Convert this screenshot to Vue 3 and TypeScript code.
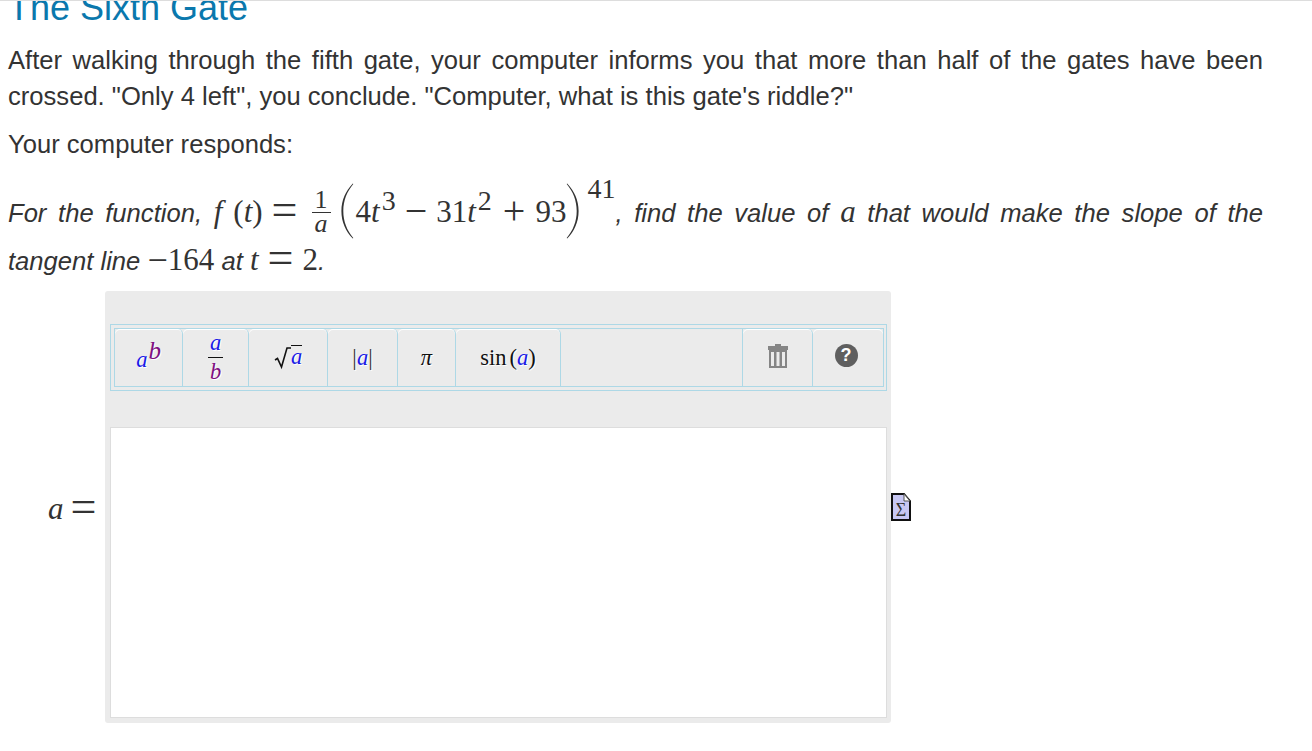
<template>
  <div class="page">
    <h2 class="title">The Sixth Gate</h2>
    <p>
      After walking through the fifth gate, your computer informs you that more than half of the gates have been
      crossed. "Only 4 left", you conclude. "Computer, what is this gate's riddle?"
    </p>
    <p>Your computer responds:</p>
    <p class="riddle">
      <em>For the function,</em> <span class="math"><i class="fn">f</i><span class="gap-s">(</span><i>t</i>)<span class="rel">=</span><span class="frac"><span class="num">1</span><i class="den">a</i></span><svg class="paren open-paren" viewBox="0 0 14 56" aria-hidden="true"><path d="M12.8 0.4C5.600 8 1.400 17 1.400 28s4.200 20 11.400 27.600l.5-.6C7 47.400 3.300 38.600 3.300 28S7 8.600 13.300 1z" /></svg><span>4<i>t</i><sup>3</sup></span><span class="bin">−</span><span>31<i>t</i><sup>2</sup></span><span class="bin plus">+</span><span>93</span><svg class="paren" viewBox="0 0 14 56" aria-hidden="true"><path d="M1.200 0.4C8.400 8 12.600 17 12.600 28S8.400 48 1.200 55.600l-.5-.6C7 47.400 10.700 38.600 10.700 28S7 8.600.7 1z" /></svg><sup class="outer">41</sup></span><em>, find the value of</em> <span class="math"><i>a</i></span> <em>that would make the slope of the tangent line</em> <span class="math"><span class="neg">−</span>164</span> <em>at</em> <span class="math"><i>t</i><span class="rel">=</span>2</span><em>.</em>
    </p>

    <div class="answer">
      <div class="label"><i>a</i><span class="rel">=</span></div>
      <div class="widget">
        <div class="toolbar">
          <div class="toolbar-inner">
            <button class="tool w1"><span class="mj low"><i class="v">a</i><sup class="p">b</sup></span></button>
            <button class="tool w2">
              <span class="mj stack"><i class="v">a</i><i class="p">b</i></span>
            </button>
            <button class="tool w3">
              <span class="mj">
                <svg class="radical" width="17" height="23" viewBox="0 0 17 23" aria-hidden="true">
                  <path d="M1 13l2.500-1.500L7.500 20 13 1h4" fill="none" stroke="#111" stroke-width="1.600" />
                </svg><i class="v over">a</i>
              </span>
            </button>
            <button class="tool w4"><span class="mj"><span class="bar">|</span><i class="v">a</i><span class="bar">|</span></span></button>
            <button class="tool w5"><span class="mj"><i>π</i></span></button>
            <button class="tool w6"><span class="mj">sin<span class="open">(</span><i class="v">a</i>)</span></button>
            <div class="spacer"></div>
            <button class="tool w7" aria-label="Clear">
              <svg class="icon-up" width="20" height="24" viewBox="0 0 20 24" aria-hidden="true">
                <path fill="#858585" fill-rule="evenodd" d="M7 0h6v2h7v4H0V2h7zM1 6h18v18H1zm2 2v14h3V8zm5.500 0v14h3V8zm5.500 0v14h3V8z" />
              </svg>
            </button>
            <button class="tool w8 last" aria-label="Help"><span class="help icon-up">?</span></button>
          </div>
        </div>
        <div class="editor"></div>
      </div>
      <svg class="doc" width="20" height="28" viewBox="0 0 20 28" aria-hidden="true">
        <path d="M1 1h12l6 7v19H1z" fill="#c8c8f4" stroke="#111" stroke-width="2" />
        <path d="M13 1v7h6z" fill="#fff" stroke="#555" />
        <text x="10" y="23" text-anchor="middle" class="sigma">Σ</text>
      </svg>
    </div>
  </div>
</template>

<script setup lang="ts">
// static page, nothing to wire up
</script>

<style>
html,
body {
  margin: 0;
  background: #fff;
  overflow: hidden;
}
</style>

<style scoped>
.page {
  height: 751px;
  box-sizing: border-box;
  border-top: 1px solid #ddd;
  padding: 0 49px 0 8px;
  overflow: hidden;
  font-family: 'Liberation Sans', Arial, sans-serif;
  font-size: 25.6px;
  line-height: 36px;
  color: #333;
}

.title {
  margin: -13px 0 14px;
  font-size: 36px;
  line-height: 40px;
  font-weight: 400;
  color: #0a78ad;
}

p {
  margin: 0 0 12px;
  text-align: justify;
}

em {
  font-style: italic;
}

.math {
  display: inline-block;
  font-family: 'Liberation Serif', 'Times New Roman', serif;
  font-size: 31px;
  white-space: nowrap;
}

.math sup {
  font-size: 28px;
  line-height: 0;
  margin-left: 2px;
  vertical-align: 12px;
}

.math .outer {
  vertical-align: 24px;
  margin-left: 7px;
}

.fn {
  padding-right: 6px;
}

.gap-s {
  margin-left: 5px;
}

.rel {
  margin: 0 9px;
  font-size: 46px;
  line-height: 0;
  vertical-align: -3px;
}

.bin {
  margin: 0 9px;
  font-size: 40px;
  line-height: 0;
  vertical-align: -2px;
}

.plus {
  margin: 0 10px 0 11px;
}

.neg {
  font-size: 36px;
  line-height: 0;
  vertical-align: -2px;
}

.frac {
  display: inline-flex;
  flex-direction: column;
  align-items: center;
  margin-left: 5px;
  vertical-align: 14px;
  font-size: 26px;
  line-height: 18px;
}

.num {
  border-bottom: 1px solid #333;
  padding: 0 3px 3px;
}

.den {
  line-height: 21px;
}

.paren {
  width: 14px;
  height: 56px;
  margin: 9px 0 3px;
  vertical-align: -20px;
  fill: #333;
}

.open-paren {
  margin-left: 9px;
  margin-right: 2px;
}

.answer {
  display: flex;
  align-items: center;
}

.label {
  width: 97px;
  padding: 4px 0 0 40px;
  box-sizing: border-box;
  font-family: 'Liberation Serif', 'Times New Roman', serif;
  font-size: 31px;
  white-space: nowrap;
}

.label .rel {
  margin: 0 0 0 7px;
}

.widget {
  width: 786px;
  height: 432px;
  box-sizing: border-box;
  padding: 33px 4px 5px 5px;
  background: #ebebeb;
  border-radius: 3px;
}

.toolbar {
  height: 67px;
  box-sizing: border-box;
  padding: 3px 2px 3px 3px;
  border: 1px solid #add8e6;
  margin-bottom: 36px;
}

.toolbar-inner {
  display: flex;
  height: 100%;
  box-sizing: border-box;
  border: 1px solid #add8e6;
}

.tool {
  display: flex;
  align-items: center;
  justify-content: center;
  padding: 0;
  border: 0;
  border-right: 1px solid #add8e6;
  border-radius: 5px 5px 0 0;
  background: #ebebeb;
  box-shadow: inset 0 1px 0 #fff;
  flex: none;
}

.w1 { width: 68px; }
.w2 { width: 66px; }
.w3 { width: 79px; }
.w4 { width: 70px; }
.w5 { width: 58px; }
.w6 { width: 105px; }
.w7 { width: 70px; }
.w8 { width: 70px; }

.last {
  border-right: 0;
}

.spacer {
  flex: 1;
  border-right: 1px solid #add8e6;
}

.mj {
  font-family: 'Liberation Serif', 'Times New Roman', serif;
  font-size: 22.500px;
  line-height: 24px;
  color: #111;
  text-shadow: 1px 1px 0 #fff;
  white-space: nowrap;
}

.low {
  margin-top: 5px;
}

.v {
  color: #1a1ae6;
}

.p {
  color: #800f80;
}

sup.p {
  font-size: 25px;
  line-height: 0;
  margin-left: 1px;
  vertical-align: 8px;
  font-style: italic;
}

.stack {
  display: flex;
  flex-direction: column;
  align-items: center;
  line-height: 22px;
}

.stack .v {
  border-bottom: 1px solid #111;
  padding: 0 2px 3px;
  margin-bottom: 3px;
}

.over {
  display: inline-block;
  border-top: 1px solid #111;
  line-height: 22px;
}

.radical {
  vertical-align: -6px;
}

.bar {
  color: #333;
}

.open {
  margin-left: 3px;
}

.icon-up {
  margin-bottom: 4px;
}

.help {
  display: block;
  width: 23px;
  height: 23px;
  margin-right: 4px;
  border-radius: 50%;
  background: #5f5f5f;
  color: #fff;
  font-family: 'Liberation Sans', Arial, sans-serif;
  font-size: 18px;
  font-weight: 700;
  line-height: 23px;
  text-align: center;
}

.editor {
  height: 291px;
  box-sizing: border-box;
  background: #fff;
  border: 1px solid #ddd;
}

.doc {
  flex: none;
}

.sigma {
  font-family: 'Liberation Serif', serif;
  font-size: 18px;
  fill: #333;
}
</style>
